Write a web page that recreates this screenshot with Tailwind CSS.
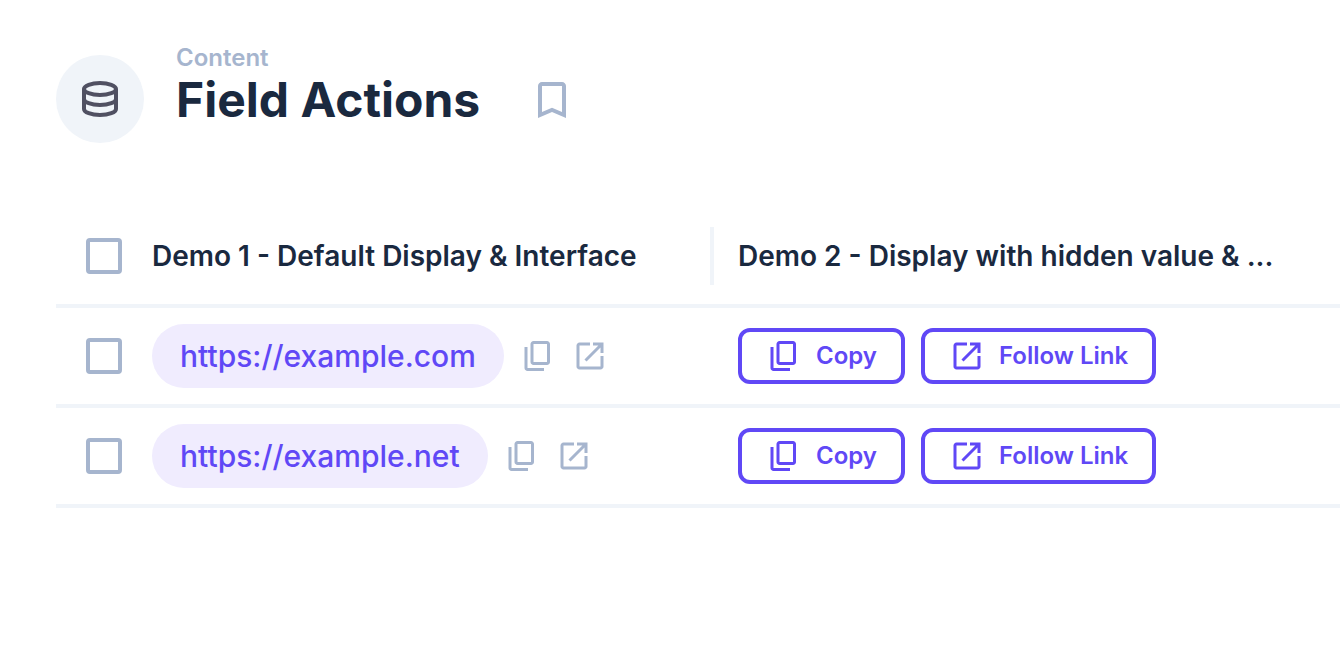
<!DOCTYPE html>
<html lang="en">
<head>
<meta charset="utf-8">
<meta name="viewport" content="width=device-width, initial-scale=1">
<title>Field Actions</title>
<script src="https://cdn.jsdelivr.net/npm/@tailwindcss/browser@4"></script>
</head>
<body class="bg-white font-['Inter',sans-serif] text-[#1a293f]">
<svg class="hidden" aria-hidden="true">
  <symbol id="copy" viewBox="0 0 24 24"><path d="M9 18q-.825 0-1.412-.587Q7 16.825 7 16V4q0-.825.588-1.413Q8.175 2 9 2h9q.825 0 1.413.587Q20 3.175 20 4v12q0 .825-.587 1.413Q18.825 18 18 18Zm0-2h9V4H9v12Zm-4 6q-.825 0-1.413-.587Q3 20.825 3 20V6h2v14h11v2Z"/></symbol>
  <symbol id="open" viewBox="0 0 24 24"><path d="M5 21q-.825 0-1.413-.587Q3 19.825 3 19V5q0-.825.587-1.413Q4.175 3 5 3h7v2H5v14h14v-7h2v7q0 .825-.587 1.413Q19.825 21 19 21Zm4.700-5.300-1.400-1.400L17.600 5H14V3h7v7h-2V6.400Z"/></symbol>
</svg>

<header class="flex items-start gap-8 pt-[42px] pb-[65px] pl-14">
  <div class="mt-[13px] flex size-22 shrink-0 items-center justify-center rounded-full bg-[#f0f4f9]">
    <svg class="size-12" viewBox="0 0 24 24" fill="none" stroke="#505062" stroke-width="2" aria-hidden="true">
      <ellipse cx="12" cy="7" rx="8" ry="3"/>
      <path d="M4 7v10c0 1.660 3.580 3 8 3s8-1.340 8-3V7M4 12c0 1.660 3.580 3 8 3s8-1.340 8-3"/>
    </svg>
  </div>
  <div>
    <p class="text-2xl leading-8 font-semibold text-[#a6b5ce]">Content</p>
    <div class="flex items-center gap-12">
      <h1 class="text-5xl leading-[52px] font-bold">Field Actions</h1>
      <button type="button" aria-label="Bookmark" class="text-[#a6b5ce]">
        <svg class="size-12" viewBox="0 0 24 24" fill="currentColor" aria-hidden="true"><path d="M17 3H7c-1.100 0-2 .9-2 2v16l7-3 7 3V5c0-1.100-.9-2-2-2zm0 15-5-2.180L7 18V5h10v13z"/></svg>
      </button>
    </div>
  </div>
</header>

<main class="pl-14">
  <table class="w-full table-fixed border-separate border-spacing-0 text-left">
    <colgroup><col class="w-24"><col class="w-[586px]"><col></colgroup>
    <thead>
      <tr class="h-[100px]">
        <th class="border-b-4 border-[#f0f4f9] p-0 pl-[30px]"><input type="checkbox" aria-label="Select all" class="block size-9 appearance-none rounded border-4 border-[#a6b5ce]"></th>
        <th class="border-b-4 border-[#f0f4f9] p-0 pr-6"><div class="flex h-[58px] items-center border-r-4 border-[#f0f4f9] text-[28px] font-semibold whitespace-nowrap">Demo 1 - Default Display &amp; Interface</div></th>
        <th class="border-b-4 border-[#f0f4f9] p-0"><div class="truncate text-[28px] font-semibold">Demo 2 - Display with hidden value &amp; ...</div></th>
      </tr>
    </thead>
    <tbody>
      <tr class="h-[100px]">
        <td class="border-b-4 border-[#f0f4f9] p-0 pl-[30px]"><input type="checkbox" aria-label="Select example.com" class="block size-9 appearance-none rounded border-4 border-[#a6b5ce]"></td>
        <td class="border-b-4 border-[#f0f4f9] p-0">
          <div class="flex items-center gap-4 text-[#a6b5ce]">
            <a href="https://example.com" class="flex h-16 items-center rounded-full bg-[#f0ecfe] px-7 text-[30px] font-medium text-[#6048f6]">https://example.com</a>
            <button type="button" aria-label="Copy"><svg class="size-9" fill="currentColor" aria-hidden="true"><use href="#copy"/></svg></button>
            <a href="https://example.com" aria-label="Follow link"><svg class="size-9" fill="currentColor" aria-hidden="true"><use href="#open"/></svg></a>
          </div>
        </td>
        <td class="border-b-4 border-[#f0f4f9] p-0">
          <div class="flex items-center gap-4 text-2xl font-semibold text-[#6048f6]">
            <button type="button" class="flex h-14 items-center gap-3.5 rounded-xl border-4 border-[#6048f6] px-6"><svg class="size-9" fill="currentColor" aria-hidden="true"><use href="#copy"/></svg>Copy</button>
            <a href="https://example.com" class="flex h-14 items-center gap-3.5 rounded-xl border-4 border-[#6048f6] px-6"><svg class="size-9" fill="currentColor" aria-hidden="true"><use href="#open"/></svg>Follow Link</a>
          </div>
        </td>
      </tr>
      <tr class="h-[100px]">
        <td class="border-b-4 border-[#f0f4f9] p-0 pl-[30px]"><input type="checkbox" aria-label="Select example.net" class="block size-9 appearance-none rounded border-4 border-[#a6b5ce]"></td>
        <td class="border-b-4 border-[#f0f4f9] p-0">
          <div class="flex items-center gap-4 text-[#a6b5ce]">
            <a href="https://example.net" class="flex h-16 items-center rounded-full bg-[#f0ecfe] px-7 text-[30px] font-medium text-[#6048f6]">https://example.net</a>
            <button type="button" aria-label="Copy"><svg class="size-9" fill="currentColor" aria-hidden="true"><use href="#copy"/></svg></button>
            <a href="https://example.net" aria-label="Follow link"><svg class="size-9" fill="currentColor" aria-hidden="true"><use href="#open"/></svg></a>
          </div>
        </td>
        <td class="border-b-4 border-[#f0f4f9] p-0">
          <div class="flex items-center gap-4 text-2xl font-semibold text-[#6048f6]">
            <button type="button" class="flex h-14 items-center gap-3.5 rounded-xl border-4 border-[#6048f6] px-6"><svg class="size-9" fill="currentColor" aria-hidden="true"><use href="#copy"/></svg>Copy</button>
            <a href="https://example.net" class="flex h-14 items-center gap-3.5 rounded-xl border-4 border-[#6048f6] px-6"><svg class="size-9" fill="currentColor" aria-hidden="true"><use href="#open"/></svg>Follow Link</a>
          </div>
        </td>
      </tr>
    </tbody>
  </table>
</main>
</body>
</html>
